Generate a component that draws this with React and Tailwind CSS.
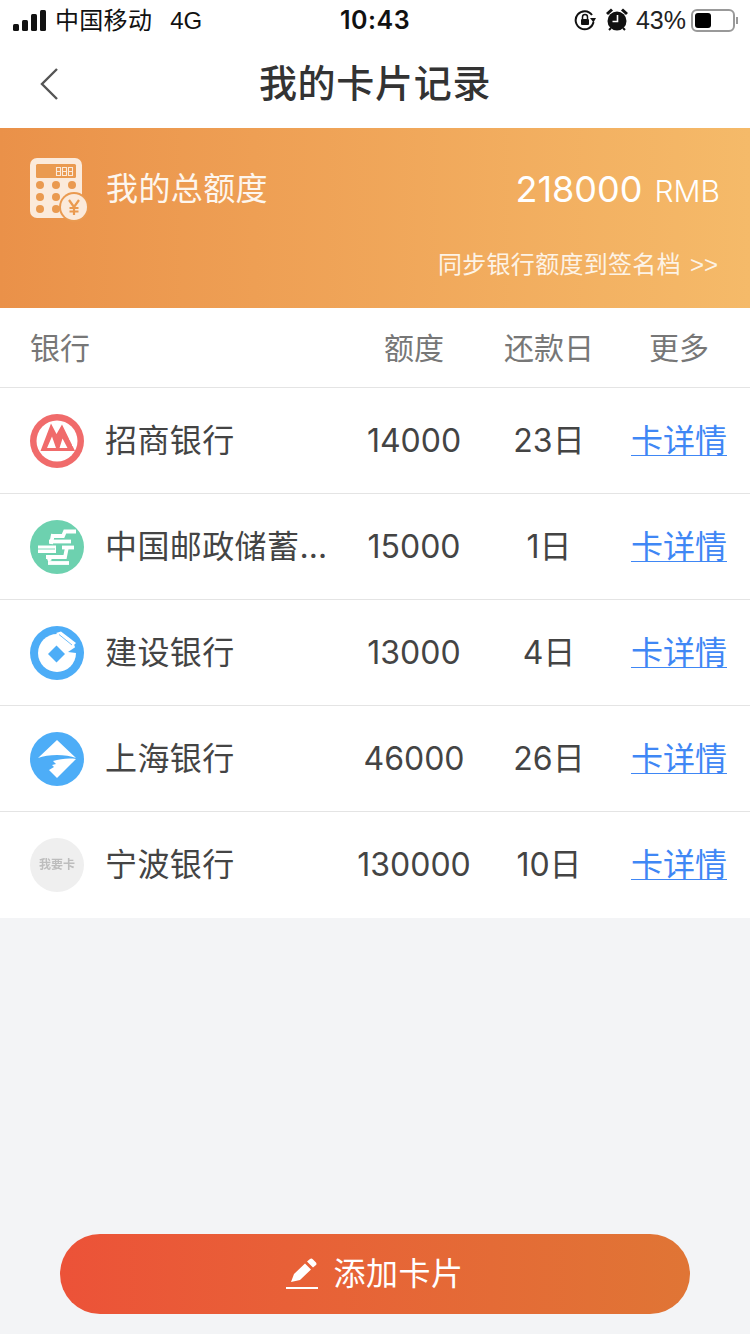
const cjk = "font-['Inter','Noto_Sans_CJK_SC','Liberation_Sans',sans-serif]"

const banks = [
  { name: '招商银行', limit: '14000', day: '23日', logo: <CmbLogo /> },
  { name: '中国邮政储蓄银行', limit: '15000', day: '1日', logo: <PostLogo /> },
  { name: '建设银行', limit: '13000', day: '4日', logo: <CcbLogo /> },
  { name: '上海银行', limit: '46000', day: '26日', logo: <ShLogo /> },
  { name: '宁波银行', limit: '130000', day: '10日', logo: <NbLogo /> },
]

function CmbLogo() {
  return (
    <svg width="54" height="54" viewBox="0 0 54 54">
      <circle cx="27" cy="27" r="27" fill="#f06b6b" />
      <circle cx="27" cy="27" r="20.5" fill="#fff" />
      <path d="M10.500 37 L21 9.500 L26.500 20 L32 10.500 L45 37 Z" fill="#f06b6b" />
      <path d="M17 34 L22 22.500 L26 34 Z M29.500 34 L32.500 24.500 L37.500 34 Z" fill="#fff" />
      <path d="M38 22.500h8.500M39.500 25.500h7M41 28.500h5.500M42 31.500h4" stroke="#fff" strokeWidth="1" />
    </svg>
  )
}

function PostLogo() {
  return (
    <svg width="54" height="54" viewBox="0 0 54 54">
      <circle cx="27" cy="27" r="27" fill="#6dd1af" />
      <g fill="none" stroke="#fff" strokeWidth="3.800">
        <path d="M22 16 H33 L35 11.500 H46" />
        <path d="M19 21.500 H41" />
        <path d="M21 24 L23 14" />
        <path d="M32 27.500 H44" />
        <path d="M16 37 H35 L37 27" />
        <path d="M18 43 H39" />
        <path d="M20 41 L18 36" />
      </g>
      <rect x="8" y="25.500" width="18" height="7.500" fill="#fff" />
      <path d="M8 29 H25" stroke="#6dd1af" strokeWidth="0.900" />
    </svg>
  )
}

function CcbLogo() {
  return (
    <svg width="54" height="54" viewBox="0 0 54 54">
      <circle cx="27" cy="27" r="27" fill="#4dadf7" />
      <circle cx="27" cy="27" r="19" fill="#fff" />
      <path d="M18 28 L26.500 19.500 L35 28 L26.500 36.500 Z" fill="#4dadf7" />
      <path d="M26 7 L31 5.500 L46 17 L42 21 Z" fill="#fff" />
      <path d="M29 8.500 L42 19" stroke="#4dadf7" strokeWidth="0.800" />
      <path d="M38 26 L50 18 L54 27 L46 27 Z" fill="#4dadf7" />
    </svg>
  )
}

function ShLogo() {
  return (
    <svg width="54" height="54" viewBox="0 0 54 54">
      <circle cx="27" cy="27" r="27" fill="#4dadf7" />
      <path d="M27 8 L46 26 C36 22 18 22 8 26 Z" fill="#fff" />
      <path d="M46 27 L27 46 L19 38 L24 35 L22 33 L26 32 L23 29 C30 27 38 26 46 27 Z" fill="#fff" />
    </svg>
  )
}

function NbLogo() {
  return (
    <div className="w-[54px] h-[54px] rounded-full bg-[#efefef] flex items-center justify-center">
      <span className="text-[12px] leading-none font-bold text-[#bdbdbd] blur-[0.7px]">我要卡</span>
    </div>
  )
}

function CalculatorIcon() {
  const dots = [[10, 27], [26, 27], [42, 27], [10, 39], [26, 39], [42, 39], [10, 51], [26, 51]]
  return (
    <svg width="60" height="64" viewBox="0 0 60 64">
      <rect x="0" y="0" width="52" height="60" rx="7" fill="#fbeadb" />
      <rect x="6" y="6" width="40" height="14" rx="1.500" fill="#ea9a50" />
      <path d="M26.500 9.500h4v8h-4zM26.500 13.500h4M32.500 9.500h4v8h-4zM32.500 13.500h4M38.500 9.500h4v8h-4zM38.500 13.500h4" fill="none" stroke="#fbeadb" strokeWidth="1.100" />
      {dots.map(([cx, cy]) => (
        <circle key={`${cx}-${cy}`} cx={cx} cy={cy} r="4" fill="#ea9a50" />
      ))}
      <circle cx="44" cy="49" r="15" fill="#ea9a50" />
      <circle cx="44" cy="49" r="13" fill="#fbeadb" />
      <path d="M39 42 L44 49 L49 42 M44 49 V57 M39.500 50 H48.500 M39.500 53.500 H48.500" fill="none" stroke="#ea9a50" strokeWidth="2.200" />
    </svg>
  )
}

function StatusBar() {
  return (
    <div className="h-[40px] flex items-center justify-between px-[13px] text-[#111]">
      <div className="flex items-center w-[260px]">
        <div className="flex items-end gap-[3px] h-[21px]">
          <div className="w-[6px] h-[7px] rounded-[1.5px] bg-[#111]" />
          <div className="w-[6px] h-[11px] rounded-[1.5px] bg-[#111]" />
          <div className="w-[6px] h-[17px] rounded-[1.5px] bg-[#111]" />
          <div className="w-[6px] h-[21px] rounded-[1.5px] bg-[#111]" />
        </div>
        <span className="ml-[9px] text-[24px] leading-none tracking-[0.3px] pt-[1px]">中国移动</span>
        <span className="ml-[18px] text-[24px] leading-none font-['Liberation_Sans'] pt-[1px]">4G</span>
      </div>
      <span className="text-[25px] leading-none font-semibold font-['Inter'] tracking-[0.5px] pt-[1px]">10:43</span>
      <div className="flex items-center justify-end w-[260px]">
        <svg width="22" height="22" viewBox="0 0 22 22" className="mr-[10px]">
          <path d="M18 6 A9 9 0 1 0 19.500 13" fill="none" stroke="#111" strokeWidth="2" />
          <path d="M16 9 L22 9 L19.500 13.500 Z" fill="#111" />
          <rect x="7" y="10" width="8" height="6" rx="1" fill="#111" />
          <path d="M8.500 10 V8 a2.500 2.500 0 0 1 5 0 V10" fill="none" stroke="#111" strokeWidth="1.500" />
        </svg>
        <svg width="22" height="24" viewBox="0 0 22 24" className="mr-[8px]">
          <circle cx="11" cy="13" r="9.500" fill="#111" />
          <path d="M1 6 L6 1.500 M21 6 L16 1.500" stroke="#111" strokeWidth="3" />
          <path d="M3 22 L5 20 M19 22 L17 20" stroke="#111" strokeWidth="2" />
          <path d="M11.500 7 V13.500 H6.500" fill="none" stroke="#fff" strokeWidth="1.600" />
        </svg>
        <span className="text-[25px] leading-none font-['Liberation_Sans'] text-[#222] pt-[1px]">43%</span>
        <div className="ml-[5px] w-[44px] h-[23px] rounded-[6px] border-2 border-[#999] p-[2px]">
          <div className="w-[16px] h-full rounded-[3px] bg-black" />
        </div>
        <div className="w-[2px] h-[7px] bg-[#999] ml-[1px] -mr-[1px]" />
      </div>
    </div>
  )
}

export default function App() {
  return (
    <div className={`min-h-[1334px] bg-[#f3f4f6] flex flex-col ${cjk}`}>
      <div className="bg-white">
        <StatusBar />
        <div className="relative h-[88px] flex items-center justify-center">
          <svg width="20" height="34" viewBox="0 0 20 34" className="absolute left-[39px] top-[27px]">
            <path d="M18 2 L3 17 L18 32" fill="none" stroke="#555" strokeWidth="2.400" />
          </svg>
          <h1 className="text-[38px] leading-none font-medium text-[#333] tracking-[0.7px] pb-[2px]">我的卡片记录</h1>
        </div>
      </div>

      <div className="h-[180px] bg-gradient-to-r from-[#ea9149] to-[#f5ba69] pt-[30px] pl-[30px] pr-[30px] flex flex-col text-white">
        <div className="flex items-start">
          <CalculatorIcon />
          <span className="ml-[16px] mt-[11px] text-[32px] leading-[40px] tracking-[0.4px] text-[#fdf6ee]">我的总额度</span>
          <div className="ml-auto mt-[9px] flex items-baseline">
            <span className="text-[36px] leading-[44px]">218000</span>
            <span className="ml-[12px] text-[30px] leading-[44px] font-light">RMB</span>
          </div>
        </div>
        <div className="mt-[27px] mr-[2px] flex justify-end items-center text-[24px] leading-[32px] text-[#fdf3e6]">
          <span className="tracking-[0.3px]">同步银行额度到签名档</span>
          <span className="ml-[9px] font-['Liberation_Sans']">&gt;&gt;</span>
        </div>
      </div>

      <div className="bg-white">
        <div className="h-[80px] grid grid-cols-[347px_134px_136px_124px] items-center border-b border-[#e4e4e4] text-[30px] text-[#777]">
          <span className="pl-[30px] pt-[2px]">银行</span>
          <span className="text-center pt-[2px]">额度</span>
          <span className="text-center pt-[2px]">还款日</span>
          <span className="text-center pt-[2px]">更多</span>
        </div>
        {banks.map((bank, i) => (
          <div
            key={bank.name}
            className={`h-[106px] grid grid-cols-[347px_134px_136px_124px] items-center text-[32px] text-[#444] ${i < banks.length - 1 ? 'border-b border-[#e4e4e4]' : ''}`}
          >
            <div className="pl-[30px] flex items-center min-w-0">
              {bank.logo}
              <span className="ml-[21px] w-[232px] truncate tracking-[0.4px]">{bank.name}</span>
            </div>
            <span className="text-center">{bank.limit}</span>
            <span className="text-center">{bank.day}</span>
            <span className="text-center text-[#3f87f5] underline underline-offset-[3px] decoration-1">卡详情</span>
          </div>
        ))}
      </div>

      <div className="flex-1 flex flex-col justify-end px-[60px] pb-[20px]">
        <button className="h-[80px] rounded-full bg-gradient-to-r from-[#ec5238] to-[#e07535] flex items-center justify-center text-white text-[32px]">
          <svg width="34" height="32" viewBox="0 0 34 32" className="mr-[13px]">
            <path d="M5 24 L8 16 L19 5.500 L25 11.500 L14 22 Z M21 3.500 L24 1 Q25.500 0 27 1.500 L30 4.500 Q31 6 30 7 L27 9.500 Z" fill="#fff" />
            <path d="M0 30 H32" stroke="#fff" strokeWidth="2" />
          </svg>
          <span className="tracking-[0.5px]">添加卡片</span>
        </button>
      </div>
    </div>
  )
}
